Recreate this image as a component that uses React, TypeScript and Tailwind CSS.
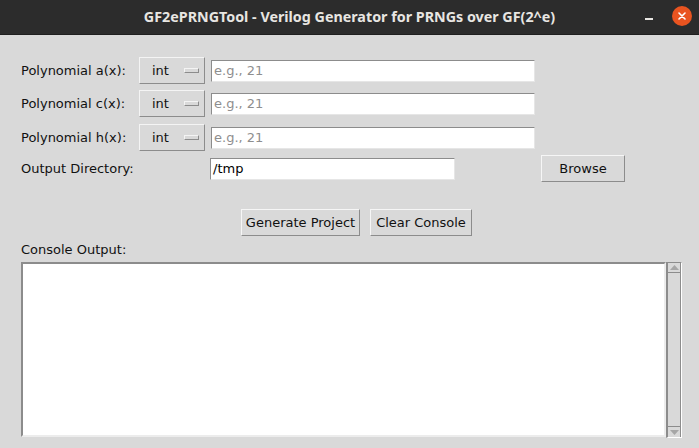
import React from 'react'

function OptionMenu() {
  return (
    <div className="w-[66px] h-[27px] flex items-center bg-[#d9d9d9] border border-t-[#f4f4f4] border-l-[#f4f4f4] border-r-[#8c8c8c] border-b-[#8c8c8c]">
      <span className="ml-[12px]">int</span>
      <span className="ml-auto mr-[5px] w-[15px] h-[5px] border border-t-[#f4f4f4] border-l-[#f4f4f4] border-r-[#8c8c8c] border-b-[#8c8c8c]" />
    </div>
  )
}

function Entry({ width, placeholder, value }: { width: string, placeholder?: string, value?: string }) {
  return (
    <div className={`${width} h-[22px] bg-white flex items-center pl-[2px] border border-t-[#8c8c8c] border-l-[#8c8c8c] border-r-[#e6e6e6] border-b-[#e6e6e6]`}>
      {value
        ? <span className="text-black">{value}</span>
        : <span className="text-[#8e8e8e]">{placeholder}</span>}
    </div>
  )
}

function Button({ label, width }: { label: string, width: string }) {
  return (
    <div className={`${width} h-[27px] flex items-center justify-center bg-[#d9d9d9] border border-t-[#f6f6f6] border-l-[#f6f6f6] border-r-[#8c8c8c] border-b-[#8c8c8c]`}>
      {label}
    </div>
  )
}

function PolyRow({ label }: { label: string }) {
  return (
    <div className="flex items-center h-[27px]">
      <span className="w-[118px]">{label}</span>
      <OptionMenu />
      <div className="ml-[6px]">
        <Entry width="w-[324px]" placeholder="e.g., 21" />
      </div>
    </div>
  )
}

function Scrollbar() {
  return (
    <div className="w-[16px] h-[176px] flex flex-col border-l-2 border-t border-[#8c8c8c] border-r border-r-white border-b border-b-white bg-[#d9d9d9]">
      <div className="h-[10px] flex items-center justify-center border-b border-[#8c8c8c] border-r border-r-[#8c8c8c]">
        <svg width="9" height="5" viewBox="0 0 9 5"><path d="M4.5 0 L9 5 L0 5 Z" fill="#a6a6a6" /></svg>
      </div>
      <div className="flex-1 border-r border-[#8c8c8c] border-b" />
      <div className="h-[10px] flex items-center justify-center border-r border-[#8c8c8c]">
        <svg width="9" height="5" viewBox="0 0 9 5"><path d="M0 0 L9 0 L4.5 5 Z" fill="#a6a6a6" /></svg>
      </div>
    </div>
  )
}

export default function App() {
  return (
    <div className="w-[699px] h-[448px] overflow-hidden bg-[#d9d9d9] flex flex-col font-['DejaVu_Sans',sans-serif] text-[13px] text-[#111]">
      <div className="h-[35px] bg-[#2c2c2c] flex items-center relative border-b border-[#1f1f1f]">
        <span className="w-full text-center font-['Noto_Sans',sans-serif] font-bold text-[14.3px] text-[#e8e6e2]">
          GF2ePRNGTool - Verilog Generator for PRNGs over GF(2^e)
        </span>
        <span className="absolute left-[645px] top-[18px] w-[8px] h-[1.5px] bg-[#e8e6e2]" />
        <span className="absolute left-[672px] top-[6px] w-[20px] h-[20px] rounded-full bg-[#e95420] flex items-center justify-center">
          <svg width="8" height="8" viewBox="0 0 8 8"><path d="M1 1 L7 7 M7 1 L1 7" stroke="#fff" strokeWidth="1.6" strokeLinecap="round" /></svg>
        </span>
      </div>

      <div className="pl-[21px] pt-[22px] flex flex-col">
        <PolyRow label="Polynomial a(x):" />
        <div className="mt-[6px]"><PolyRow label="Polynomial c(x):" /></div>
        <div className="mt-[7px]"><PolyRow label="Polynomial h(x):" /></div>

        <div className="mt-[4px] flex items-center h-[27px]">
          <span className="w-[189px]">Output Directory:</span>
          <Entry width="w-[245px]" value="/tmp" />
          <div className="ml-[86px]">
            <Button label="Browse" width="w-[84px]" />
          </div>
        </div>

        <div className="mt-[27px] ml-[220px] flex gap-[10px]">
          <Button label="Generate Project" width="w-[119px]" />
          <Button label="Clear Console" width="w-[102px]" />
        </div>

        <div className="mt-[6px] h-[16px] leading-[16px]">Console Output:</div>

        <div className="mt-[4px] flex">
          <div className="w-[645px] h-[175px] bg-white border-2 border-t-[#8c8c8c] border-l-[#8c8c8c] border-r-[#ececec] border-b-[#ececec]" />
          <Scrollbar />
        </div>
      </div>
    </div>
  )
}
